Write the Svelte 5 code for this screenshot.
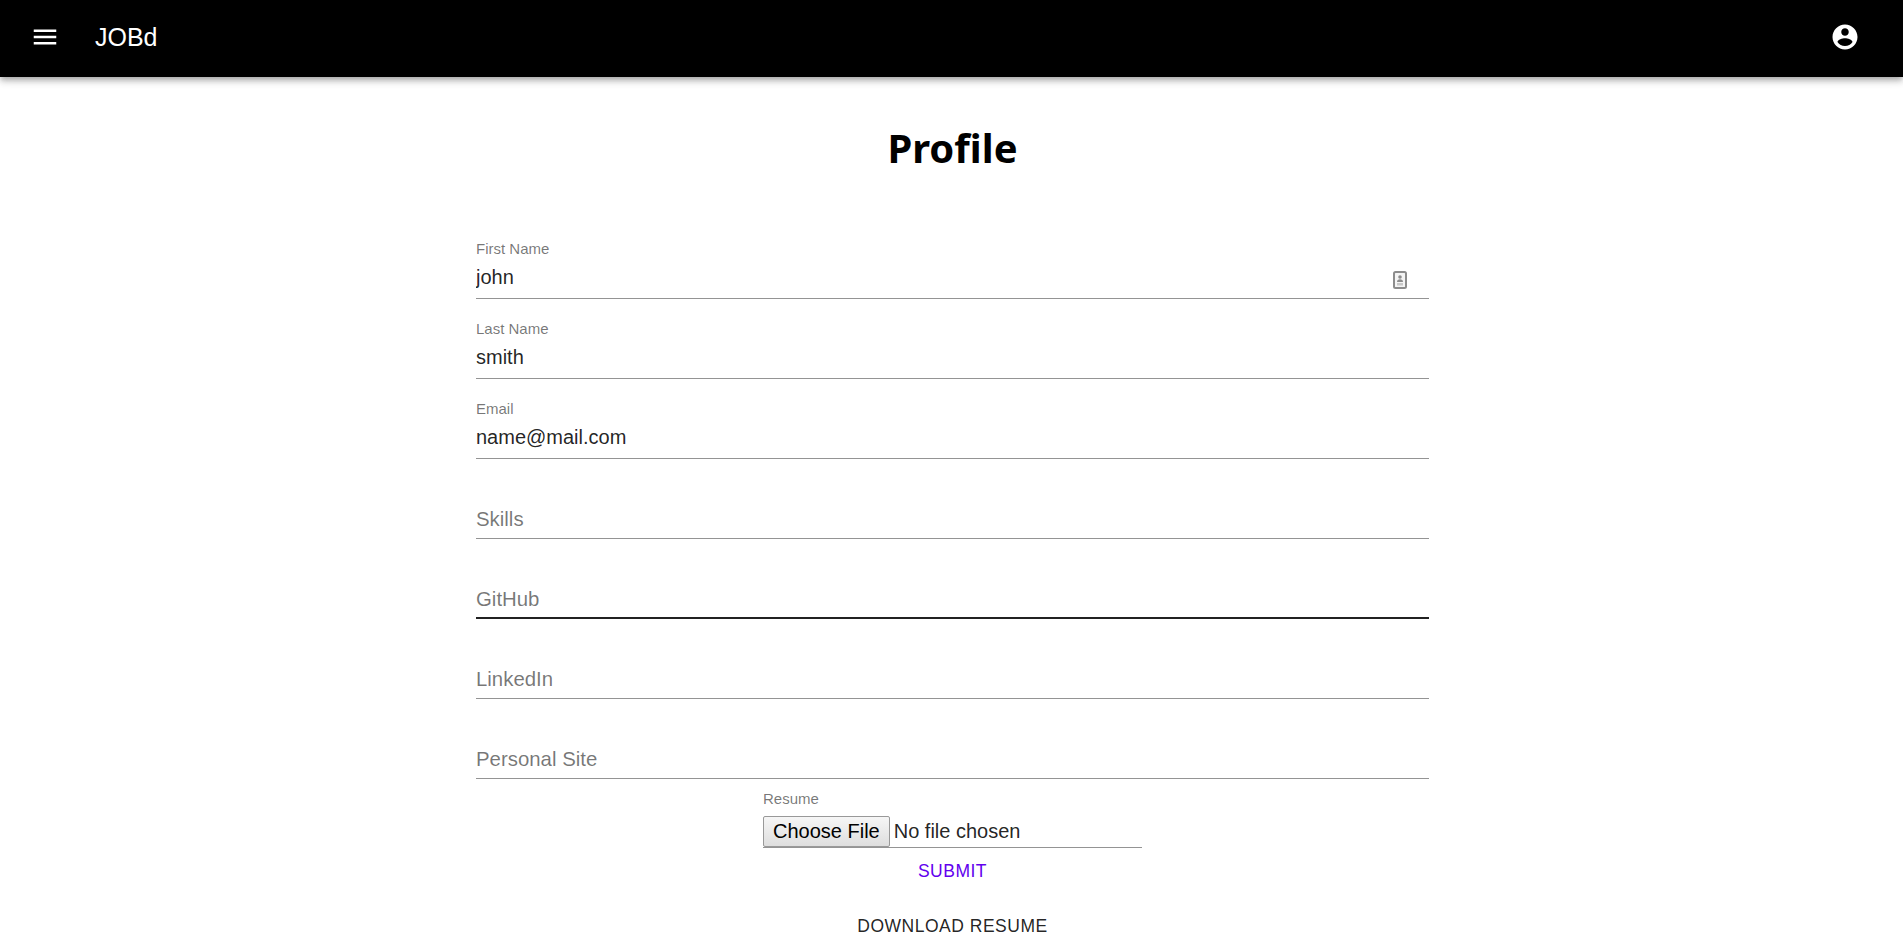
<script>
  const fields = [
    { label: 'First Name', value: 'john', autofill: true },
    { label: 'Last Name', value: 'smith' },
    { label: 'Email', value: 'name@mail.com' },
    { label: 'Skills', value: '' },
    { label: 'GitHub', value: '', hover: true },
    { label: 'LinkedIn', value: '' },
    { label: 'Personal Site', value: '' }
  ];
</script>

<header class="appbar">
  <button class="icon-btn menu" aria-label="menu">
    <svg viewBox="0 0 24 24"><path d="M3 18h18v-2H3v2zm0-5h18v-2H3v2zm0-7v2h18V6H3z" /></svg>
  </button>
  <div class="brand">JOBd</div>
  <button class="icon-btn account" aria-label="account">
    <svg viewBox="0 0 24 24"><path d="M12 2C6.48 2 2 6.48 2 12s4.48 10 10 10 10-4.48 10-10S17.52 2 12 2zm0 3c1.66 0 3 1.34 3 3s-1.34 3-3 3-3-1.34-3-3 1.34-3 3-3zm0 14.2c-2.5 0-4.71-1.28-6-3.22.03-1.99 4-3.08 6-3.08 1.99 0 5.97 1.09 6 3.08-1.29 1.94-3.5 3.22-6 3.22z" /></svg>
  </button>
</header>

<main class="page">
  <h1>Profile</h1>

  <form class="form">
    {#each fields as f}
      <div class="field" class:hover={f.hover} class:empty={!f.value}>
        {#if f.value}
          <label for={f.label}>{f.label}</label>
        {/if}
        <input id={f.label} type="text" value={f.value} placeholder={f.label} />
        {#if f.autofill}
          <svg class="autofill" viewBox="0 0 14 18">
            <rect x="1" y="1" width="12" height="16" rx="1.5" fill="#f4f4f4" stroke="#8c8c8c" stroke-width="2" />
            <circle cx="7" cy="6" r="1.8" fill="#8c8c8c" />
            <path d="M4 11c0-1.8 1.2-2.8 3-2.8s3 1 3 2.8z" fill="#8c8c8c" />
            <rect x="4" y="12" width="6" height="2.5" fill="#c8c8c8" />
          </svg>
        {/if}
      </div>
    {/each}

    <div class="resume">
      <label for="resume">Resume</label>
      <input id="resume" type="file" />
    </div>

    <button type="button" class="btn submit">Submit</button>
    <button type="button" class="btn download">Download Resume</button>
  </form>
</main>

<style>
  :global(body) {
    margin: 0;
    background: #fff;
    font-family: "Liberation Sans", Arial, sans-serif;
  }

  .appbar {
    height: 77px;
    box-sizing: border-box;
    background: #000;
    color: #fff;
    display: flex;
    align-items: center;
    padding: 0 43px 3px 30px;
    box-shadow: 0 2.5px 5px -1px rgba(0, 0, 0, 0.2), 0 5px 6px 0 rgba(0, 0, 0, 0.14), 0 1.25px 12px 0 rgba(0, 0, 0, 0.12);
    position: relative;
  }

  .icon-btn {
    background: none;
    border: none;
    padding: 0;
    width: 30px;
    height: 30px;
    color: #fff;
    cursor: pointer;
  }

  .icon-btn svg {
    display: block;
    width: 30px;
    height: 30px;
    fill: currentColor;
  }

  .brand {
    margin-left: 35px;
    font-size: 25px;
    line-height: 1.6;
    flex: 1;
  }

  .page {
    display: flex;
    flex-direction: column;
    align-items: center;
    padding-left: 2px;
  }

  h1 {
    margin: 45px 0 58px;
    font-family: "Noto Sans", sans-serif;
    font-size: 40px;
    font-weight: 700;
    line-height: 52px;
    color: #000;
  }

  .form {
    width: 953px;
    display: flex;
    flex-direction: column;
    align-items: center;
  }

  .field {
    width: 100%;
    height: 67px;
    margin-bottom: 13px;
    box-sizing: border-box;
    border-bottom: 1.25px solid rgba(0, 0, 0, 0.42);
    display: flex;
    flex-direction: column;
    justify-content: flex-end;
    position: relative;
  }

  .field.hover {
    border-bottom: 2.5px solid rgba(0, 0, 0, 0.87);
  }

  label {
    display: block;
    font-size: 15px;
    line-height: 17px;
    color: rgba(0, 0, 0, 0.54);
  }

  .field label {
    margin-bottom: 6px;
  }

  .field input {
    border: none;
    outline: none;
    padding: 0 0 6px;
    margin: 0;
    height: 29px;
    box-sizing: content-box;
    width: 100%;
    font-family: inherit;
    font-size: 20px;
    color: rgba(0, 0, 0, 0.87);
    background: transparent;
  }

  .field input::placeholder {
    color: rgba(0, 0, 0, 0.54);
    opacity: 1;
    font-size: 20.4px;
  }

  .field.empty input {
    padding-bottom: 4px;
  }

  .field.hover input {
    padding-bottom: 3px;
  }

  .autofill {
    position: absolute;
    left: 917px;
    top: 39px;
    width: 14px;
    height: 18px;
  }

  .resume {
    width: 379px;
    margin-top: -2px;
    border-bottom: 1.25px solid rgba(0, 0, 0, 0.42);
  }

  .resume label {
    margin-bottom: 9px;
  }

  .resume input {
    display: block;
    font-family: inherit;
    font-size: 20px;
    height: 31px;
    padding: 0;
    width: 100%;
    color: rgba(0, 0, 0, 0.87);
  }

  .resume input::file-selector-button {
    height: 31px;
    padding: 0 9px;
    margin: 0 4px 0 0;
    font: inherit;
    color: #000;
    border: 1px solid #999;
    border-radius: 2px;
    background: linear-gradient(#f6f6f6, #dedede);
  }

  .btn {
    border: none;
    background: none;
    font-family: inherit;
    font-size: 17.5px;
    line-height: 1.75;
    letter-spacing: 0.02857em;
    text-transform: uppercase;
    cursor: pointer;
    padding: 7px 10px;
  }

  .submit {
    color: #6200ee;
    margin-top: 1px;
  }

  .download {
    color: rgba(0, 0, 0, 0.87);
    margin-top: 10px;
  }
</style>
